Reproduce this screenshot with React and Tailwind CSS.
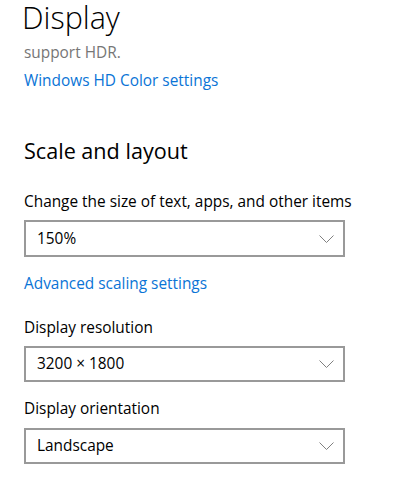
import React from 'react';

function Chevron() {
    return (
        <svg width="15" height="8" viewBox="0 0 15 8" fill="none" className="shrink-0">
            <path d="M0.5 0.5 L7.5 7.5 L14.5 0.5" stroke="#808080" strokeWidth="1" />
        </svg>
    );
}

function Dropdown({ value, className = '' }) {
    return (
        <div className={`w-[321px] border-2 border-[#999999] flex items-center justify-between pl-[11px] pr-[9px] text-[15.4px] leading-[20px] text-black ${className}`}>
            <span>{value}</span>
            <Chevron />
        </div>
    );
}

export default function App() {
    return (
        <div className="w-[410px] h-[480px] bg-white overflow-hidden pl-6 text-black" style={{ fontFamily: '"Open Sans", "Noto Sans", sans-serif' }}>
            {/* Cabecera */}
            <h1 className="text-[30.5px] leading-[34px] font-light -ml-[2px]">Display</h1>
            <p className="mt-[9px] text-[15.4px] leading-[20px] text-[#767676]">support HDR.</p>
            <a className="block mt-[8px] text-[15.4px] leading-[20px] text-[#0a74d6]">Windows HD Color settings</a>

            {/* Escala */}
            <h2 className="mt-[46px] text-[21.6px] leading-[28px]">Scale and layout</h2>
            <p className="mt-[27px] text-[15.4px] leading-[20px]">Change the size of text, apps, and other items</p>
            <Dropdown value="150%" className="mt-[8px] h-[37px]" />
            <a className="block mt-[17px] text-[15.4px] leading-[20px] text-[#0a74d6]">Advanced scaling settings</a>

            <p className="mt-[24px] text-[15.4px] leading-[20px]">Display resolution</p>
            <Dropdown value="3200 × 1800" className="mt-[8px] h-[36px]" />

            <p className="mt-[17px] text-[15.4px] leading-[20px]">Display orientation</p>
            <Dropdown value="Landscape" className="mt-[9px] h-[36px]" />
        </div>
    );
}
